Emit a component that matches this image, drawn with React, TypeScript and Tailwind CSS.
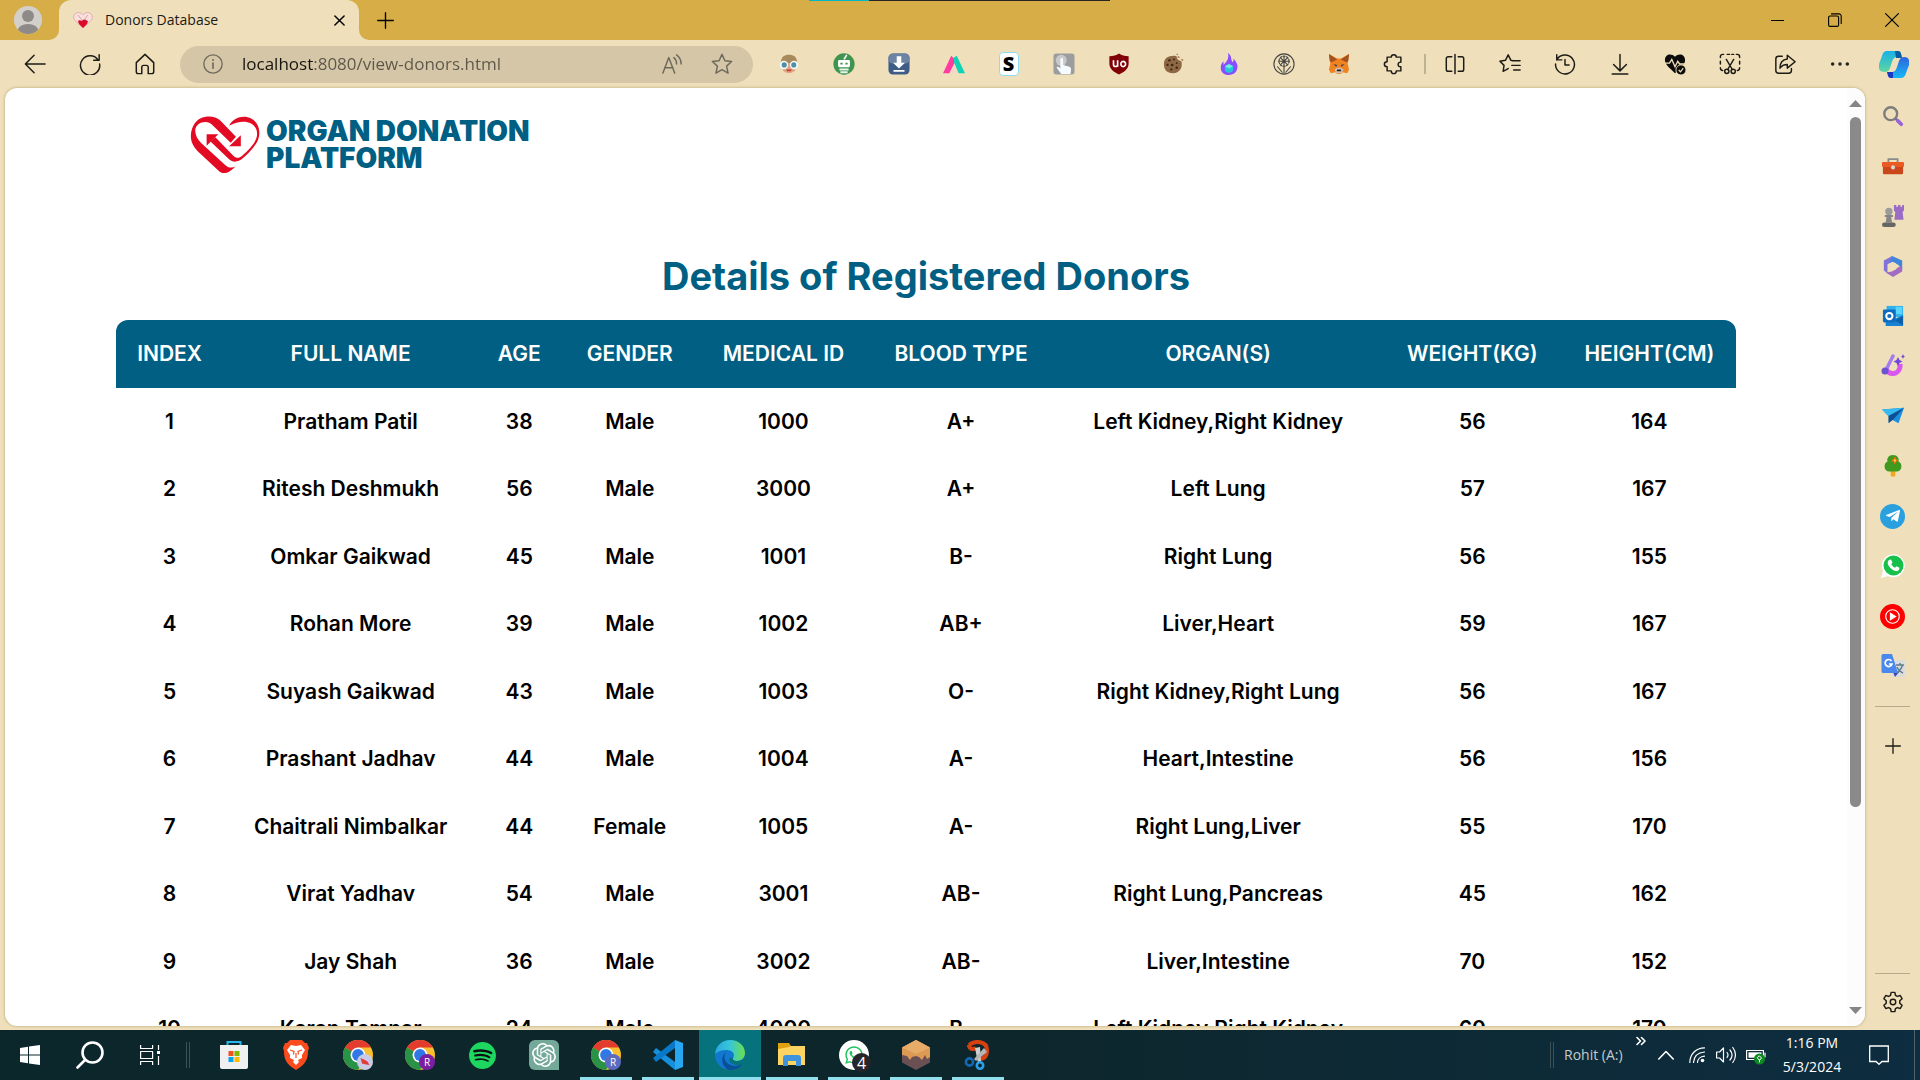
import React from "react";
import { SiSpotify, SiOpenai } from "react-icons/si";
import { FaWhatsapp, FaTelegramPlane } from "react-icons/fa";

type IconProps = { children: React.ReactNode; size?: string; box?: string };

function Line({ children, size = "h-[22px] w-[22px]", box = "0 0 24 24" }: IconProps) {
  return (
    <svg viewBox={box} className={size} fill="none" stroke="currentColor" strokeWidth="1.6" strokeLinecap="round" strokeLinejoin="round" aria-hidden="true">
      {children}
    </svg>
  );
}

function Pic({ children, size = "h-[22px] w-[22px]", box = "0 0 24 24" }: IconProps) {
  return (
    <svg viewBox={box} className={size} aria-hidden="true">
      {children}
    </svg>
  );
}

const extensions: { name: string; icon: React.ReactNode }[] = [
  {
    name: "Reader glasses",
    icon: (
      <Pic>
        <path d="M3 12C3 4 7 2 12 2s9 2 9 10z" fill="#a98a5c" />
        <path d="M5 11h14v6c0 3-3 5-7 5s-7-2-7-5z" fill="#e3a483" />
        <path d="M9 18h6l-1 2h-4z" fill="#b5432f" />
        <circle cx="6.5" cy="13" r="4.6" fill="#f4fbfd" />
        <circle cx="17.5" cy="13" r="4.6" fill="#f4fbfd" />
        <circle cx="6.8" cy="13" r="2.8" fill="#4f8fa5" />
        <circle cx="17.2" cy="13" r="2.8" fill="#4f8fa5" />
      </Pic>
    ),
  },
  {
    name: "Robot",
    icon: (
      <Pic>
        <circle cx="12" cy="12" r="11.6" fill="#3f9450" />
        <path d="M12 7l3-5" stroke="#fff" strokeWidth="1.8" />
        <rect x="5.5" y="7.5" width="13" height="8" rx="1.5" fill="#fff" />
        <path d="M8 10.500h2.500v2H8zm5.500 0H16v2h-2.500z" fill="#3f9450" />
        <path d="M7 17h10v2H7zm1 3h8v2H8z" fill="#e7f4e9" />
      </Pic>
    ),
  },
  {
    name: "Download helper",
    icon: (
      <Pic>
        <rect x=".5" y=".5" width="23" height="23" rx="5" fill="#3e5c86" />
        <rect x=".5" y=".5" width="23" height="11" rx="5" fill="#6d83a3" />
        <path d="M9.500 3.500h5v7h4L12 17 5.500 10.500h4zM6 18.500h12v2H6z" fill="#fff" />
      </Pic>
    ),
  },
  {
    name: "Peaks",
    icon: (
      <Pic>
        <path d="M0 22L9 3l5 5-7 14z" fill="#ff3aa0" />
        <path d="M12 5l3-2 9 19h-7l-5-12z" fill="#10d3b5" />
        <path d="M12 13l5 9H7z" fill="#f6d6c6" />
      </Pic>
    ),
  },
  {
    name: "S tool",
    icon: (
      <span className="flex h-6 w-5 items-center justify-center rounded-sm border border-[#8fdcf2] bg-white text-xl leading-none font-extrabold text-black">S</span>
    ),
  },
  {
    name: "Touch",
    icon: (
      <Pic>
        <rect x=".5" y=".5" width="23" height="23" rx="3" fill="#9d9d9d" />
        <circle cx="9" cy="8" r="6" fill="#c9c9c9" />
        <path d="M8 7c0-2 3-2 3 0v6l7 2c2 1 2 3 1 8H9l-5-7c0-2 3-1 4 1z" fill="#f5fbff" />
      </Pic>
    ),
  },
  {
    name: "Shield blocker",
    icon: (
      <Pic>
        <path d="M12 .5c3 2 6 3 10.500 3v8c0 6-5 9.500-10.500 12C6.500 21 1.500 17.500 1.500 11.500v-8C6 3.500 9 2.500 12 .5z" fill="#800008" />
        <path d="M6 8v4.500c0 3 4.500 3 4.500 0V8m0 7V9m3.500 3a2.600 2.800 0 1 0 0-.1" fill="none" stroke="#fff" strokeWidth="1.800" />
      </Pic>
    ),
  },
  {
    name: "Cookies",
    icon: (
      <Pic>
        <path d="M12 3c1 0 3 .5 3 1 0 3 2 4 5 5 2 7-2 13-9 13S1 18 1 12 5 3 12 3z" fill="#8e6744" />
        <path d="M16 4l2 1M20 7l2 1M15 1l1 1" stroke="#a6764a" strokeWidth="1.500" />
        <g fill="#3b2416">
          <circle cx="7" cy="8" r="1.300" /><circle cx="12" cy="7" r="1" /><circle cx="10" cy="13" r="1.400" /><circle cx="5" cy="13" r="1.200" /><circle cx="15" cy="16" r="1.300" /><circle cx="9" cy="18" r="1.200" /><circle cx="15" cy="11" r="1" />
        </g>
      </Pic>
    ),
  },
  {
    name: "Flame",
    icon: (
      <Pic>
        <path d="M11 0c5 4 2 6 5 10 1-1 1-2 1-4 4 5 5 8 4 11-1 5-5 7-9 7s-9-2-9-8c0-3 1-5 3-7v4c4-4 6-7 5-13z" fill="#8a4dff" />
        <path d="M12 12l4.500 2.500v5L12 22l-4.500-2.500v-5z" fill="#22c7dd" />
        <path d="M12 12l4.500 2.500L12 17l-4.500-2.500z" fill="#6ff0d9" />
      </Pic>
    ),
  },
  {
    name: "Dandelion",
    icon: (
      <Line>
        <g stroke="#444" strokeWidth="1.200">
          <circle cx="12" cy="12" r="11" />
          <circle cx="12" cy="9" r="5.500" strokeDasharray="2 1.500" />
          <path d="M12 3v19M6 9h12M8 5l8 8M16 5l-8 8M5 15l5 6M19 15l-5 6" />
        </g>
      </Line>
    ),
  },
  {
    name: "Fox wallet",
    icon: (
      <Pic>
        <path d="M1 1l9 5h4l9-5-1.500 11 1.500 6-2 4-5-1-2 2h-4l-2-2-5 1-2-4 1.500-6z" fill="#f08321" />
        <path d="M1 1l9 6-6 3-2-1zM23 1l-9 6 6 3 2-1z" fill="#a5501f" />
        <path d="M6 12l4 1-1 2zM18 12l-4 1 1 2z" fill="#3b3550" />
        <path d="M7 18l3-2h4l3 2-2 4H9z" fill="#d5bfb2" />
        <path d="M10 18h4l.5 2h-5z" fill="#222" />
      </Pic>
    ),
  },
  {
    name: "Extensions",
    icon: (
      <Line>
        <path d="M9 4.500C9 1 14.500 1 14.500 4.500h5V10c-4-.5-4 5.500 0 5v4.500h-5c0 4-5.500 4-5.500 0H4.500V15C.5 15 .5 9.500 4.500 9.500v-5z" />
      </Line>
    ),
  },
];

const tools: { name: string; icon: React.ReactNode }[] = [
  { name: "Split screen", icon: <Line><path d="M8.500 4H4.500a2 2 0 0 0-2 2v12a2 2 0 0 0 2 2h4M15.500 4h4a2 2 0 0 1 2 2v12a2 2 0 0 1-2 2h-4M12 1.500v21" /></Line> },
  { name: "Favorites", icon: <Line><path d="M15 8.500L13 8l-3-6-3 6-6 1 4.500 4.500L4.500 20l5.500-3M15 8.500h8M14 13.500h9M16 18.500h7M10 17l-1 .5" /></Line> },
  { name: "History", icon: <Line><path d="M3 2v5.500h5.500M3 7.500A10.300 10.300 0 1 1 1.700 12M12 7v6h4.500" /></Line> },
  { name: "Downloads", icon: <Line><path d="M12 1.500V19M5 12.500l7 7 7-7M3.500 22.800h17" /></Line> },
  {
    name: "Browser essentials",
    icon: (
      <Pic>
        <path d="M12 4C8 0 1 1 1 8c0 5 6 9 11 14 5-5 11-9 11-14 0-7-7-8-11-4z" fill="#0b0b0b" />
        <path d="M0 11h6l2.500-4 3.500 8 3-6 2 3h6" fill="none" stroke="#efe0bb" strokeWidth="1.500" />
        <circle cx="18.500" cy="18.500" r="5.500" fill="#0b0b0b" stroke="#efe0bb" />
        <path d="M16 18.500l2 2 3-4" fill="none" stroke="#efe0bb" strokeWidth="1.300" />
      </Pic>
    ),
  },
  { name: "Screenshot", icon: <Line><path d="M1.500 5V4a2.500 2.500 0 0 1 2.500-2.500h1M9 1.500h2.500M14 1.500h2M19 1.500h1A2.500 2.500 0 0 1 22.500 4v1M1.500 9v3M22.500 9v3M1.500 16c0 2 1 3 2.500 3M22.500 16c0 2-1 3-2.500 3M8 7l6.500 11M16 7L9.500 18" /><circle cx="8.500" cy="20" r="2.300" /><circle cx="15.500" cy="20" r="2.300" /></Line> },
  { name: "Share", icon: <Line><path d="M9 3.500H5a3 3 0 0 0-3 3V19a3 3 0 0 0 3 3h11a3 3 0 0 0 3-3v-2M14.500 2.500L23 9.500l-8.500 7V12.500c-4 0-6 1-8 4 0-6 3-9.500 8-10z" /></Line> },
  { name: "Settings and more", icon: <Pic><g fill="#222"><circle cx="4" cy="12" r="1.900" /><circle cx="12" cy="12" r="1.900" /><circle cx="20" cy="12" r="1.900" /></g></Pic> },
];

const sidebar: { name: string; icon: React.ReactNode }[] = [
  {
    name: "Search",
    icon: <Pic><circle cx="9.500" cy="9.500" r="7" fill="none" stroke="#7d7d7d" strokeWidth="2.600" /><path d="M15 15l2 2" stroke="#666" strokeWidth="2.500" /><path d="M17 17l4 4" stroke="#9a62d6" strokeWidth="4" strokeLinecap="round" /></Pic>,
  },
  {
    name: "Shopping",
    icon: <Pic><path d="M7 8V4.500h10V8" fill="none" stroke="#8a8a8a" strokeWidth="2" /><rect x="1" y="10" width="22" height="11" rx="1.500" fill="#c9471b" /><rect x="0" y="7.500" width="24" height="5.500" rx="1" fill="#ea5b24" /><circle cx="12" cy="13.500" r="2.200" fill="#d7d7d7" /></Pic>,
  },
  {
    name: "Games",
    icon: <Pic><path d="M13 0h2.500v2h2V0H20v2h2V0h2v6l-1.500 1.500L23.500 16H13.500l1-8.500L13 6z" fill="#9a6cc6" /><circle cx="7.500" cy="7" r="4" fill="#9b9b9b" /><path d="M3 11h9v2h-2l1 6H4l1-6H3z" fill="#858585" /><rect x="0" y="19" width="15" height="5" rx="2.500" fill="#666" /></Pic>,
  },
  {
    name: "Microsoft 365",
    icon: <Pic><path d="M11 1L2 6v11l4 3V10l8-4-3-5z" fill="#8173d9" /><path d="M11 1l11 5v10l-4-5-7-4-3 2z" fill="#3f86da" /><path d="M22 12v6l-10 6-8-5 7-1 7-5z" fill="#a06cc4" /><circle cx="12" cy="12.500" r="4.200" fill="#efe0bb" /></Pic>,
  },
  {
    name: "Outlook",
    icon: <Pic><rect x="5" y="1" width="18" height="12" fill="#31b1ea" /><rect x="15" y="2" width="7" height="8" fill="#5bd6fb" /><path d="M4 12l10 3 9-4v12H4z" fill="#1681d1" /><path d="M14 17l9-5v10z" fill="#0f5ea8" /><rect x="1" y="5" width="14" height="14" rx="1.500" fill="#0c6cc4" /><circle cx="8" cy="12" r="3.400" fill="none" stroke="#fff" strokeWidth="2.200" /></Pic>,
  },
  {
    name: "Designer",
    icon: <Pic size="h-6 w-6"><path d="M5 14c1 8 15 8 14-4" fill="none" stroke="#d957ef" strokeWidth="5" /><path d="M12 2L5 16" stroke="#a77bf0" strokeWidth="3.500" strokeLinecap="round" /><circle cx="4" cy="17" r="3.500" fill="#6d52cf" /><path d="M17 3l1.500 3 3 1.500-3 1.500L17 12l-1.500-3-3-1.500 3-1.500zM22 0l.7 1.700 1.300.8-1.300.8L22 5l-.7-1.700-1.300-.8 1.300-.8z" fill="#7145dc" /></Pic>,
  },
  {
    name: "Drop",
    icon: <Pic><path d="M0 5l24-2-6 17-7-4z" fill="#1b8fe0" /><path d="M0 5l24-2L7 12z" fill="#37b9f2" /><path d="M7 12l17-9L12 16l-5 4z" fill="#0d4f92" /></Pic>,
  },
  {
    name: "Tree",
    icon: <Pic><rect x="9.500" y="17" width="5" height="6.500" rx="1" fill="#f0a81c" /><path d="M12 0c5 0 7 4 6 7 5 2 4 11-2 11H8C2 18 1 9 6 7c-1-3 1-7 6-7z" fill="#3f9a1f" /><path d="M14 3.500v5M11.500 6h5" stroke="#f06a12" strokeWidth="2.400" strokeLinecap="round" /><circle cx="14" cy="6" r="1.300" fill="#ffd43b" /></Pic>,
  },
  {
    name: "Telegram",
    icon: <span className="flex h-[25px] w-[25px] items-center justify-center rounded-full bg-[#2aa1de] text-white"><FaTelegramPlane className="h-4 w-4" /></span>,
  },
  {
    name: "WhatsApp",
    icon: <Pic size="h-6 w-6"><path d="M0 24l2-7A11.500 11.500 0 1 1 7 22z" fill="#fff" /><circle cx="12.500" cy="11.500" r="10" fill="#16c04a" /><path d="M8 6l2-.5 1.500 3-1.200 1.500c.7 1.800 2 3 3.700 3.800l1.500-1.600 3 1.600c0 3-2.500 3.700-4 3.300C10.500 16 7 12 6.700 9c0-1.300.5-2.300 1.300-3z" fill="#fff" /></Pic>,
  },
  {
    name: "YouTube Music",
    icon: <Pic size="h-[25px] w-[25px]"><circle cx="12" cy="12" r="12" fill="#f00" /><circle cx="12" cy="12" r="6.500" fill="none" stroke="#fff" strokeWidth="1.100" /><path d="M9.500 8l6.500 4-6.500 4z" fill="#fff" /></Pic>,
  },
  {
    name: "Translate",
    icon: <Pic size="h-6 w-6"><rect x="11" y="6" width="13" height="17" rx="1.500" fill="#dcdcdc" /><path d="M15 11h8M19 9v2M21.500 11c-1 4-3 6-6 8M16 13c1 3 4 5 6 6" fill="none" stroke="#5f7d8c" strokeWidth="1.400" /><path d="M12 18h6l-4 5z" fill="#3949ab" /><path d="M2 0h9l6 19H2a1.500 1.500 0 0 1-1.500-1.500v-16A1.500 1.500 0 0 1 2 0z" fill="#4a88ee" /><path d="M10.500 7A3.500 3.500 0 1 0 11 10H8" fill="none" stroke="#fff" strokeWidth="1.700" /></Pic>,
  },
];

function Chrome({ badge, tone }: { badge: React.ReactNode; tone: string }) {
  return (
    <span className="relative block h-[30px] w-[30px]">
      <svg viewBox="0 0 30 30" className="h-[30px] w-[30px]" aria-hidden="true">
        <circle cx="15" cy="15" r="15" fill="#fbc02d" />
        <path d="M15 15L2 7.500A15 15 0 0 1 28 7.500H15z" fill="#e33b2e" />
        <path d="M2 7.500A15 15 0 0 0 15 30l6.500-11.300L15 15z" fill="#2a9246" />
        <circle cx="15" cy="15" r="7.500" fill="#fff" />
        <circle cx="15" cy="15" r="5.900" fill="#2f78e6" />
      </svg>
      <span className={`absolute right-0 bottom-0 flex h-4 w-4 items-center justify-center rounded-full text-[10px] leading-none text-white ${tone}`}>{badge}</span>
    </span>
  );
}

const apps: { name: string; state: "idle" | "open" | "active"; icon: React.ReactNode }[] = [
  {
    name: "Microsoft Store",
    state: "idle",
    icon: <Pic size="h-[30px] w-[30px]" box="0 0 30 30"><path d="M8.500 6V2h13v4" fill="none" stroke="#2bb3ee" strokeWidth="2" /><path d="M1 5h28v22a2 2 0 0 1-2 2H3a2 2 0 0 1-2-2z" fill="#f0f0f0" /><path d="M9.500 11h5v5h-5z" fill="#f25022" /><path d="M15.500 11h5v5h-5z" fill="#7fba00" /><path d="M9.500 17h5v5h-5z" fill="#00a4ef" /><path d="M15.500 17h5v5h-5z" fill="#ffb900" /></Pic>,
  },
  {
    name: "Brave",
    state: "idle",
    icon: (
      <Pic size="h-[30px] w-[26px]" box="0 0 26 30">
        <path d="M7 0h12l3 3 2 0 2 5-1 3c0 8-2 13-12 19C3 24 1 19 1 11L0 8l2-5h2z" fill="#fb4a1d" />
        <path d="M8 5l5 1 5-1 4 5-3 5 0 3-4 2 1 2-3 3-3-3 1-2-4-2 0-3-3-5z" fill="#fff" />
        <path d="M7 10l4 1.500-.5 3M19 10l-4 1.500.5 3M13 13v5" fill="none" stroke="#fb4a1d" strokeWidth="1.200" />
      </Pic>
    ),
  },
  { name: "Chrome, first profile", state: "idle", icon: <Chrome tone="bg-[#c9cbe6]" badge={<Pic size="h-3 w-3"><path d="M3 4l9 4 5 3 4 7-7-1-8-2z" fill="#e23b3b" /></Pic>} /> },
  { name: "Chrome, R profile", state: "idle", icon: <Chrome tone="bg-[#7b1fa2]" badge="R" /> },
  { name: "Spotify", state: "idle", icon: <span className="rounded-full bg-[#0c1012]"><SiSpotify className="h-[27px] w-[27px] text-[#1ed760]" /></span> },
  { name: "ChatGPT", state: "idle", icon: <span className="flex h-[30px] w-[30px] items-center justify-center rounded-md rounded-br-none bg-[#74a99a] text-white"><SiOpenai className="h-6 w-6" /></span> },
  { name: "Chrome, work profile", state: "open", icon: <Chrome tone="bg-[#5c6bc0]" badge="R" /> },
  {
    name: "Visual Studio Code",
    state: "open",
    icon: <Pic size="h-[30px] w-[30px]" box="0 0 30 30"><path d="M22 30L0 12l3-4 19 14z" fill="#1590dc" /><path d="M22 0L0 18l3 4L22 8z" fill="#0a78c8" /><path d="M22 0l8 3v24l-8 3z" fill="#29a8f2" /></Pic>,
  },
  {
    name: "Microsoft Edge",
    state: "active",
    icon: (
      <Pic size="h-[30px] w-[30px]" box="0 0 30 30">
        <defs>
          <linearGradient id="edgeTop" x1="0" x2="1"><stop offset="0" stopColor="#2aa7e0" /><stop offset=".5" stopColor="#36c6d8" /><stop offset="1" stopColor="#6be04a" /></linearGradient>
        </defs>
        <circle cx="15" cy="15" r="15" fill="#1277cf" />
        <path d="M0 14C1 5 8 0 15 0c9 0 15 6 15 13 0 5-4 8-8 8-3 0-5-1-4-3 3-4-1-8-6-8-6 0-10 2-12 4z" fill="url(#edgeTop)" />
        <path d="M11 12c-4 6 0 13 8 14 4 0 7-1 9-3-3 5-8 7-13 7C8 29 4 18 11 12z" fill="#0b4f96" />
        <path d="M18 18c-1 2 1 3 4 3 3 0 7-1 8-5v7l-2 1c-6 3-14 0-14-5 1-1 3-2 4-1z" fill="#06727c" />
      </Pic>
    ),
  },
  {
    name: "File Explorer",
    state: "open",
    icon: <Pic size="h-[30px] w-[30px]" box="0 0 30 30"><path d="M1 3h11l2 3v4H1z" fill="#dfa00f" /><path d="M1 9l11-2 2-1h14v19H1z" fill="#fdd462" /><path d="M6 26V18a3 3 0 0 1 3-3h12a3 3 0 0 1 3 3v8h-5v-5h-8v5z" fill="#3f93dc" /></Pic>,
  },
  {
    name: "WhatsApp",
    state: "open",
    icon: (
      <span className="relative flex h-[30px] w-[30px] items-center justify-center rounded-full bg-white text-[#22c35e]">
        <FaWhatsapp className="h-5 w-5" />
        <span className="absolute -right-0.5 -bottom-0.5 flex h-[19px] w-[19px] items-center justify-center rounded-full bg-[#24262b] text-base leading-none text-white">4</span>
      </span>
    ),
  },
  {
    name: "Honey block",
    state: "open",
    icon: <Pic size="h-[30px] w-[28px]" box="0 0 28 30"><path d="M14 0l14 7.500v15L14 30 0 22.500v-15z" fill="#6b5053" /><path d="M14 0l14 7.500V17l-3 2-2-4-3 5-3-3-3-1-4 1-2 3-3-4-5-1V7.500z" fill="#dd9a55" /><path d="M14 0l14 7.500L14 14 0 7.500z" fill="#e8ac69" /></Pic>,
  },
  {
    name: "Snip",
    state: "open",
    icon: <Pic size="h-[30px] w-[30px]" box="0 0 30 30"><path d="M6 5c6-5 18-4 18 5 0 6-3 9-8 9M6 5c0 4 4 5 7 3" fill="none" stroke="#d8410f" strokeWidth="4" /><path d="M12 8l5-1 1 15-3 1z" fill="#cfcfcf" /><path d="M21 8l3 4-11 9-2-2z" fill="#b5b5b5" /><circle cx="6.500" cy="22" r="3.600" fill="none" stroke="#1467b3" strokeWidth="2.600" /><circle cx="17" cy="25.500" r="3.200" fill="none" stroke="#2b9fe8" strokeWidth="2.600" /></Pic>,
  },
];

const columns = [
  { label: "INDEX", width: "w-[108px]" },
  { label: "FULL NAME", width: "w-[254px]" },
  { label: "AGE", width: "w-[83px]" },
  { label: "GENDER", width: "w-[138px]" },
  { label: "MEDICAL ID", width: "w-[169px]" },
  { label: "BLOOD TYPE", width: "w-[186px]" },
  { label: "ORGAN(S)", width: "w-[328px]" },
  { label: "WEIGHT(KG)", width: "w-[180px]" },
  { label: "HEIGHT(CM)", width: "w-[174px]" },
];

const donors = [
  ["1", "Pratham Patil", "38", "Male", "1000", "A+", "Left Kidney,Right Kidney", "56", "164"],
  ["2", "Ritesh Deshmukh", "56", "Male", "3000", "A+", "Left Lung", "57", "167"],
  ["3", "Omkar Gaikwad", "45", "Male", "1001", "B-", "Right Lung", "56", "155"],
  ["4", "Rohan More", "39", "Male", "1002", "AB+", "Liver,Heart", "59", "167"],
  ["5", "Suyash Gaikwad", "43", "Male", "1003", "O-", "Right Kidney,Right Lung", "56", "167"],
  ["6", "Prashant Jadhav", "44", "Male", "1004", "A-", "Heart,Intestine", "56", "156"],
  ["7", "Chaitrali Nimbalkar", "44", "Female", "1005", "A-", "Right Lung,Liver", "55", "170"],
  ["8", "Virat Yadhav", "54", "Male", "3001", "AB-", "Right Lung,Pancreas", "45", "162"],
  ["9", "Jay Shah", "36", "Male", "3002", "AB-", "Liver,Intestine", "70", "152"],
  ["10", "Karan Tamnar", "24", "Male", "4000", "B-", "Left Kidney,Right Kidney", "60", "170"],
];

function TabBar() {
  return (
    <header className="relative flex h-10 shrink-0 items-stretch bg-[#d6ad46]">
      <div className="absolute top-0 left-[809px] flex h-px w-[301px]">
        <span className="w-[60px] bg-[#00b7c3]" />
        <span className="flex-1 bg-[#2a2520]" />
      </div>
      <button aria-label="Profile" className="flex w-[59px] items-center pl-3.5">
        <svg viewBox="0 0 28 28" className="h-7 w-7" aria-hidden="true">
          <defs><clipPath id="avatar"><circle cx="14" cy="14" r="14" /></clipPath></defs>
          <g clipPath="url(#avatar)">
            <rect width="28" height="28" fill="#d3d0cc" />
            <circle cx="14" cy="10" r="6" fill="#8d8a87" />
            <ellipse cx="14" cy="25" rx="10.500" ry="7" fill="#8d8a87" />
          </g>
        </svg>
      </button>
      <div className="relative flex w-[300px] items-center rounded-t-xl bg-[#efe0bb] pr-3.5 pl-3.5">
        <svg viewBox="0 0 10 10" className="absolute bottom-0 -left-2.5 h-2.5 w-2.5" aria-hidden="true"><path d="M10 0v10H0A10 10 0 0 0 10 0z" fill="#efe0bb" /></svg>
        <svg viewBox="0 0 10 10" className="absolute -right-2.5 bottom-0 h-2.5 w-2.5" aria-hidden="true"><path d="M0 0v10h10A10 10 0 0 1 0 0z" fill="#efe0bb" /></svg>
        <svg viewBox="0 0 20 17" className="h-[17px] w-5" aria-hidden="true">
          <path d="M10 16L1.500 8C-1 4 2 .5 5.500.5 8 .5 10 3 10 3s2-2.500 4.500-2.500C18 .5 21 4 18.500 8z" fill="#fadfdc" stroke="#d9a3a3" strokeWidth=".8" />
          <path d="M5 9c2-2 3 1 5-1s3 1 5 1l-1 3-4 4-4-4z" fill="#dc0a28" />
          <path d="M5 3l4 5M15 3l-4 5" stroke="#d9a3a3" />
        </svg>
        <span className="flex-1 pl-3 text-sm text-[#1c1a15]">Donors Database</span>
        <button aria-label="Close tab"><Line size="h-[11px] w-[11px]"><path d="M2 2l20 20M22 2L2 22" strokeWidth="3.200" /></Line></button>
      </div>
      <button aria-label="New tab" className="flex items-center pl-[18px]"><Line size="h-[17px] w-[17px]"><path d="M12 1v22M1 12h22" strokeWidth="1.900" /></Line></button>
      <div className="ml-auto flex">
        <button aria-label="Minimize" className="flex w-[57px] items-center justify-center"><span className="h-px w-[13px] bg-black" /></button>
        <button aria-label="Restore" className="flex w-[57px] items-center justify-center"><Line size="h-3.5 w-3.5" box="0 0 14 14"><path d="M.6 4.500a1.500 1.500 0 0 1 1.500-1.500h7a1.500 1.500 0 0 1 1.500 1.500v7.400a1.500 1.500 0 0 1-1.500 1.500h-7a1.500 1.500 0 0 1-1.500-1.500zM3.500.9h7.500a2.200 2.200 0 0 1 2.200 2.200v7.400" strokeWidth="1.100" /></Line></button>
        <button aria-label="Close window" className="flex w-[57px] items-center justify-center"><Line size="h-3.5 w-3.5" box="0 0 14 14"><path d="M.6.6l12.800 12.800M13.400.6L.6 13.400" strokeWidth="1.200" /></Line></button>
      </div>
    </header>
  );
}

function Toolbar() {
  return (
    <nav className="flex h-12 shrink-0 items-center bg-[#efe0bb] pl-[7px] text-[#1d1b16]">
      <button aria-label="Back" className="flex w-[55px] justify-center"><Line><path d="M11 2.500L1.500 12l9.500 9.500M2 12h21" /></Line></button>
      <button aria-label="Refresh" className="flex w-[55px] justify-center"><Line><path d="M22 2v6h-6M21 8a10.500 10.500 0 1 0 1.500 4" /></Line></button>
      <button aria-label="Home" className="flex w-[55px] justify-center"><Line><path d="M2.500 10.500L12 1.500l9.500 9v10a2 2 0 0 1-2 2H15.500v-7a2 2 0 0 0-2-2h-3a2 2 0 0 0-2 2v7H4.500a2 2 0 0 1-2-2z" /></Line></button>
      <div className="ml-2 flex h-[37px] min-w-0 flex-1 items-center rounded-full bg-[#d4c6a6] px-5 text-[#6f6a5e]">
        <button aria-label="Site information" className="mx-[3px]"><Line size="h-5 w-5"><circle cx="12" cy="12" r="11" /><path d="M12 11v6" strokeWidth="2" /><path d="M12 7v.2" strokeWidth="2.200" /></Line></button>
        <input
          aria-label="Address"
          type="text"
          defaultValue="localhost:8080/view-donors.html"
          className="ml-4 min-w-0 flex-1 bg-[linear-gradient(90deg,#15130e_71px,#5d574a_71px)] bg-clip-text text-[17px] text-transparent outline-none"
        />
        <button aria-label="Read aloud" className="mr-7"><Line><path d="M2 22L8.500 5 15 22M4 16h9M14 5c2 1.500 3 4 3 7M17 2c3.500 2.500 5 6 5 10" /></Line></button>
        <button aria-label="Add to favorites"><Line><path d="M12 1.500l3.200 7 7.300.8-5.500 5 1.600 7.700L12 18.200 5.400 22 7 14.300l-5.500-5 7.300-.8z" /></Line></button>
      </div>
      <div className="ml-2 flex">
        {extensions.map((e) => (
          <button key={e.name} aria-label={e.name} className="flex w-[55px] items-center justify-center">{e.icon}</button>
        ))}
      </div>
      <span className="mr-px ml-[3px] h-5 w-0.5 bg-[#bdb292]" />
      <div className="flex">
        {tools.map((t) => (
          <button key={t.name} aria-label={t.name} className="flex w-[55px] items-center justify-center">{t.icon}</button>
        ))}
      </div>
      <button aria-label="Copilot" className="flex w-[53px] justify-center">
        <svg viewBox="0 0 30 30" className="h-[30px] w-[30px]" aria-hidden="true">
          <defs>
            <linearGradient id="copA" x1="0" x2="0" y1="0" y2="1"><stop offset="0" stopColor="#19b0e8" /><stop offset="1" stopColor="#5fd6a0" /></linearGradient>
            <linearGradient id="copB" x1="0" x2="0" y1="0" y2="1"><stop offset="0" stopColor="#2f63e0" /><stop offset="1" stopColor="#16b9f4" /></linearGradient>
          </defs>
          <path d="M8 2h11c3 0 3 3 4 6h-4c-4 0-5 2-6 5l-2 6c-1 3-3 4-5 4-6 0-7-4-6-8L3 7c1-4 3-5 5-5z" fill="url(#copA)" />
          <path d="M16 2h3c3 0 3 3 4 7h-6z" fill="#0b5d9e" />
          <path d="M22 29H12c-3 0-3-3-4-6h4c4 0 5-2 6-5l2-6c1-3 3-4 5-4 5 0 6 4 5 8l-3 8c-1 4-3 5-5 5z" fill="url(#copB)" />
          <path d="M14 29h-2c-3 0-3-3-4-6h6z" fill="#1d39c4" />
        </svg>
      </button>
    </nav>
  );
}

function Logo() {
  return (
    <a href="#home" className="flex w-fit items-center gap-[5px] font-['Inter',sans-serif]">
      <svg viewBox="28 32 212 178" className="h-[58px] w-[71px]" fill="#e30a24" aria-hidden="true">
        <path d="M166 96L118 46C104 32 78 30 60 38 35 48 26 78 28 100c2 18 14 33 24 43l60 56c13 13 30 12 53-13-13 8-24 4-32-4L60 116C36 92 34 62 60 52c16-5 28 0 36 10l54 52z" />
        <path d="M181 91v34h-36z" />
        <path d="M145 62c14-26 44-34 68-22 28 14 32 52 14 78-11 16-26 32-40 44-14 12-30 14-42 3L88 110l15-13 55 57c10 9 18 8 28-1 20-18 45-42 45-66 0-36-42-50-86-25z" />
        <path d="M76 88h36l-36 35z" />
      </svg>
      <span className="text-[28px] leading-[27px] font-black text-[#005f83]">
        ORGAN DONATION
        <br />
        PLATFORM
      </span>
    </a>
  );
}

function Page() {
  return (
    <main className="mb-1 ml-[5px] flex min-w-0 flex-1 overflow-hidden rounded-xl bg-white shadow-[0_0_3px_rgba(120,95,30,0.5)]">
      <div className="min-w-0 flex-1 overflow-hidden pt-7">
        <div className="pl-[185px]"><Logo /></div>
        <h1 className="mt-20 mb-[22px] text-center font-['Inter',sans-serif] text-[38px] leading-[44px] font-bold text-[#005f83]">Details of Registered Donors</h1>
        <table className="mx-auto w-[88%] table-fixed text-center font-['Inter',sans-serif] text-[21px] text-black">
          <thead>
            <tr className="h-[68px] bg-[#005f83] text-white">
              {columns.map((c) => (
                <th key={c.label} scope="col" className={`${c.width} font-semibold whitespace-nowrap first:rounded-tl-xl last:rounded-tr-xl`}>{c.label}</th>
              ))}
            </tr>
          </thead>
          <tbody>
            {donors.map((d) => (
              <tr key={d[0]} className="h-[67px] font-semibold even:h-[68px]">
                {d.map((v, i) => (
                  <td key={i} className="whitespace-nowrap">{v}</td>
                ))}
              </tr>
            ))}
          </tbody>
        </table>
      </div>
      <div className="flex w-[18px] flex-col items-center bg-[#fcfcfc] pt-3 pr-px pb-3">
        <Pic size="h-[7px] w-[13px]" box="0 0 13 7"><path d="M6.500 0L13 7H0z" fill="#858585" /></Pic>
        <div className="my-2.5 flex w-[11px] flex-1 flex-col">
          <div className="flex-[29] rounded-full bg-[#8a8a8a]" />
          <div className="flex-[8]" />
        </div>
        <Pic size="h-[7px] w-[13px]" box="0 0 13 7"><path d="M6.500 7L13 0H0z" fill="#858585" /></Pic>
      </div>
    </main>
  );
}

function Sidebar() {
  return (
    <aside className="flex w-[55px] shrink-0 flex-col items-center pt-[3px] text-[#1d1b16]">
      {sidebar.map((s) => (
        <button key={s.name} aria-label={s.name} className="flex h-[50px] w-full items-center justify-center">{s.icon}</button>
      ))}
      <span className="mt-[15px] h-px w-[35px] bg-[#b5ab8d]" />
      <button aria-label="Customize" className="mt-3.5 flex h-[50px] items-center"><Line size="h-4 w-4"><path d="M12 1v22M1 12h22" strokeWidth="2" /></Line></button>
      <span className="mt-auto h-px w-[35px] bg-[#b5ab8d]" />
      <button aria-label="Settings" className="flex h-14 items-center"><Line><circle cx="12" cy="12" r="3" /><path d="M10 1.500h4l.7 3.300 2 1.100 3.200-1 2 3.500-2.500 2.300v2.600l2.500 2.300-2 3.500-3.200-1-2 1.100-.7 3.300h-4l-.7-3.300-2-1.100-3.200 1-2-3.500 2.500-2.300v-2.600L2.100 8.400l2-3.500 3.200 1 2-1.100z" /></Line></button>
    </aside>
  );
}

function Taskbar() {
  return (
    <footer className="flex h-[50px] shrink-0 items-center bg-linear-to-r from-[#0c272b] via-[#0d262b] to-[#0d2d40] text-white">
      <button aria-label="Start" className="flex w-[60px] justify-center"><Pic size="h-5 w-5" box="0 0 20 20"><path d="M0 3l8-1.200v7.700H0zM9 1.600L20 0v9.500H9zM0 10.500h8v7.700L0 17zM9 10.500h11V20L9 18.400z" fill="#fff" /></Pic></button>
      <button aria-label="Search" className="flex w-[60px] justify-center"><Line size="h-7 w-7" box="0 0 28 28"><circle cx="16.500" cy="11.500" r="10" strokeWidth="2.600" /><path d="M9 19L1.500 26.500" strokeWidth="2.600" /></Line></button>
      <button aria-label="Task view" className="flex w-[60px] justify-center"><Line size="h-5 w-5" box="0 0 20 20"><path d="M.6 0v3.500h12V0M.6 20v-3.500h12V20M.6 6.500h12v7H.6zM18.500 0v5M18.500 11v9" strokeWidth="1.200" strokeLinecap="butt" /><path d="M17 6h3v3h-3z" fill="#fff" stroke="none" /></Line></button>
      <span className="ml-1.5 h-[26px] w-1 border-x border-[#3d5155]" />
      <div className="ml-[13px] flex h-full">
        {apps.map((a) => (
          <button key={a.name} aria-label={a.name} className={`relative flex w-[62px] items-center justify-center ${a.state === "active" ? "bg-[#06727c]" : ""}`}>
            {a.icon}
            {a.state !== "idle" && <span className={`absolute bottom-0 h-[3px] bg-[#92dfee] ${a.state === "active" ? "inset-x-0" : "inset-x-[5px]"}`} />}
          </button>
        ))}
      </div>
      <div className="ml-auto flex h-full items-center">
        <span className="h-[26px] w-1 border-x border-[#3d5155]" />
        <span className="ml-2.5 w-[62px] text-sm whitespace-nowrap text-[#c3cbce]">Rohit (A:)</span>
        <button aria-label="More toolbars" className="mb-7 ml-2.5"><Line size="h-2.5 w-2.5" box="0 0 10 10"><path d="M1 1.500L4.500 5 1 8.500M5.500 1.500L9 5 5.500 8.500" /></Line></button>
        <button aria-label="Show hidden icons" className="ml-3"><Line size="h-4 w-4" box="0 0 16 16"><path d="M.8 12L8 4.500l7.200 7.500" /></Line></button>
        <button aria-label="Network" className="ml-[15px]"><Line size="h-4 w-4" box="0 0 16 16"><path d="M.8 15.500C1 7 7 1 15.500.8M4.500 15.500C5 9.500 9 5.500 15.500 5M8.500 15.500c0-3.500 3-6 7-6.300" strokeWidth="1.200" /><circle cx="13.500" cy="13.500" r="1.800" fill="#fff" stroke="none" /></Line></button>
        <button aria-label="Volume" className="ml-[11px]"><Line size="h-5 w-5" box="0 0 20 20"><path d="M.6 7h3L7.500 3v14l-3.900-4h-3zM11 7.500c1.200 1.500 1.200 3.500 0 5M14 5c2.500 3 2.500 7 0 10M16.800 2.500c3.500 4.500 3.500 10.500 0 15" strokeWidth="1.200" /></Line></button>
        <button aria-label="Battery" className="ml-2.5"><Line size="h-5 w-5" box="0 0 20 20"><path d="M.6 5.500h16.800v9H.6zM19 8v4" strokeWidth="1.200" /><path d="M2.500 7.300h13v5.400h-13z" fill="#fff" stroke="none" /><circle cx="13.500" cy="14" r="5.500" fill="#0b8a1f" stroke="none" /><path d="M13.500 11l2 2-2 2.500-2-2.500zM13.500 15v2" strokeWidth="1" /></Line></button>
        <time className="ml-[15px] w-[62px] text-center text-sm leading-6 whitespace-nowrap">1:16 PM<br />5/3/2024</time>
        <button aria-label="Notifications" className="ml-[26px]"><Line size="h-5 w-5" box="0 0 20 20"><path d="M.7 1h18.600v15.500h-6.300L10 19.300 7 16.500H.7z" strokeWidth="1.300" strokeLinejoin="miter" /></Line></button>
        <span className="ml-[25px] h-full w-1.5 border-l border-[#52656f]" />
      </div>
    </footer>
  );
}

export default function App() {
  return (
    <div className="flex h-screen flex-col overflow-hidden bg-[#efe0bb] font-['Open_Sans',sans-serif]">
      <TabBar />
      <Toolbar />
      <div className="flex min-h-0 flex-1">
        <Page />
        <Sidebar />
      </div>
      <Taskbar />
    </div>
  );
}
